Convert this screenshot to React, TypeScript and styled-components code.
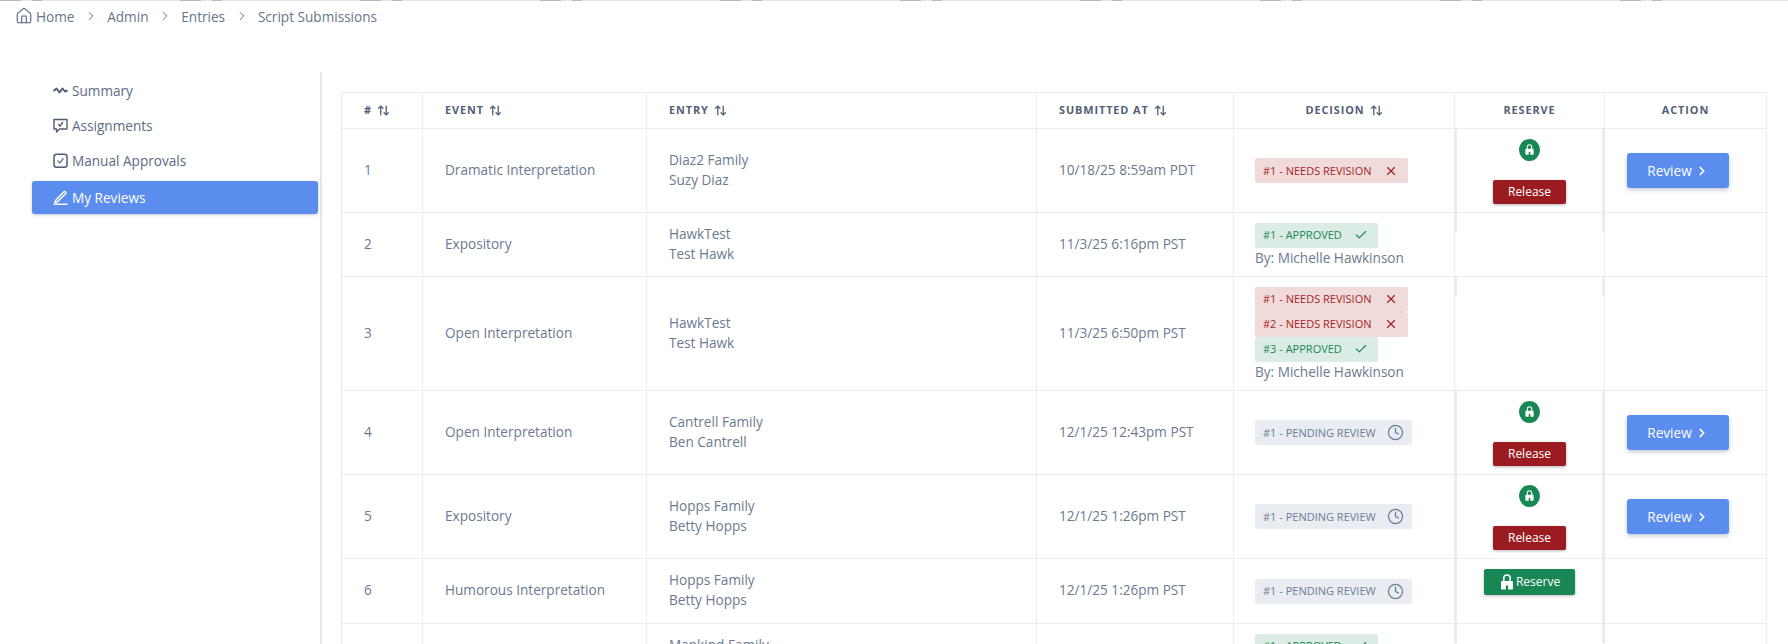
import React from "react";
import styled, { createGlobalStyle } from "styled-components";
import { ArrowUpDown, Check, ChevronRight, Clock, House, X } from "lucide-react";

const GlobalStyle = createGlobalStyle`
    html, body {
        margin: 0;
        height: 644px;
        overflow: hidden;
        background: #fff;
        font-family: "Open Sans", "Liberation Sans", sans-serif;
        color: #6b7a90;
    }
`

const TopStrip = styled.div`
    height: 1px;
    background: repeating-linear-gradient(90deg,
        #b9bbbb 0 21px, #e4e7e8 21px 32px, #b9bbbb 32px 42px, #e4e7e8 42px 180px);
`

const Breadcrumb = styled.nav`
    display: flex;
    align-items: center;
    height: 30px;
    padding-left: 15px;
    font-size: 13.6px;
    color: #66758c;
`

const Crumb = styled.span`
    display: flex;
    align-items: center;
    gap: 2px;
`

const CrumbArrow = styled(ChevronRight)`
    margin: 0 9.4px;
    color: #56657c;
`

const Layout = styled.div`
    display: flex;
    margin-top: 41px;
`

const Sidebar = styled.aside`
    box-sizing: border-box;
    width: 322px;
    height: 572px;
    padding: 2px 2px 0 32px;
    border-right: 2px solid #e3e5e8;
`

const NavItem = styled.a<{ $active?: boolean }>`
    display: flex;
    align-items: center;
    gap: 4px;
    height: 33px;
    margin-bottom: 2px;
    margin-top: ${p => (p.$active ? "4px" : "0")};
    padding-left: 21px;
    border-radius: 3px;
    font-size: 13.6px;
    background: ${p => (p.$active ? "#5b8def" : "transparent")};
    color: ${p => (p.$active ? "#fff" : "#5c6b82")};
    box-shadow: ${p => (p.$active ? "0 1px 3px rgba(60, 80, 120, 0.3)" : "none")};
`

const Content = styled.main`
    padding: 20px 0 0 19px;
`

const Table = styled.table`
    width: 1425px;
    table-layout: fixed;
    border-collapse: collapse;
    font-size: 13.6px;
`

const HeadCell = styled.th<{ $center?: boolean }>`
    height: 36px;
    padding: 0 22px 2px;
    box-sizing: border-box;
    border: 1px solid #e9edf2;
    font-size: 10.9px;
    font-weight: 700;
    letter-spacing: 0.9px;
    text-transform: uppercase;
    text-align: ${p => (p.$center ? "center" : "left")};
    color: #526075;
    white-space: nowrap;
`

const SortIcon = styled(ArrowUpDown)`
    margin-left: 5px;
    vertical-align: -3px;
`

const Row = styled.tr<{ $height: number }>`
    height: ${p => p.$height}px;
`

const Cell = styled.td`
    padding: 0 22px 2px;
    border: 1px solid #e9edf2;
    line-height: 20px;
    color: #6b7a90;
`

const DecisionCell = styled(Cell)`
    padding: 0 0 0 21px;
`

const ActionCell = styled(Cell)`
    padding: 0 22px;
`

const ReserveCell = styled(Cell)`
    padding: 0;
    vertical-align: top;
`

const ReserveBox = styled.div`
    display: flex;
    flex-direction: column;
    align-items: center;
    gap: 19px;
    min-height: 19px;
    padding: 9.5px 0 0;
    box-sizing: border-box;
    border-left: 2px solid #e9edf2;
    border-right: 2px solid #e9edf2;
    &:empty { height: 19px; padding: 0; }
`

const FullBox = styled(ReserveBox)`
    height: 83px;
`

const WideBox = styled(ReserveBox)`
    height: 64px;
`

const LockCircle = styled.span`
    display: flex;
    align-items: center;
    justify-content: center;
    width: 21px;
    height: 22px;
    border-radius: 50%;
    background: #198754;
    color: #fff;
`

const ReleaseButton = styled.button`
    width: 73px;
    height: 24px;
    padding: 0;
    border: 0;
    border-radius: 2px;
    background: #9b1c20;
    color: #fff;
    font: 500 12px "Open Sans", sans-serif;
    box-shadow: 0 1px 3px rgba(40, 40, 60, 0.35);
`

const ReserveButton = styled.button`
    display: flex;
    align-items: center;
    justify-content: center;
    gap: 1px;
    width: 91px;
    height: 26px;
    padding: 0;
    border: 0;
    border-radius: 2px;
    background: #198754;
    color: #fff;
    font: 500 12px "Open Sans", sans-serif;
    box-shadow: 0 1px 3px rgba(40, 40, 60, 0.3);
`

const ReviewButton = styled.button`
    display: flex;
    align-items: center;
    justify-content: center;
    gap: 3px;
    width: 102px;
    height: 35px;
    padding: 0;
    border: 0;
    border-radius: 3px;
    background: #5b8def;
    color: #fff;
    font: 500 13.6px "Open Sans", sans-serif;
    box-shadow: 0 2px 4px rgba(60, 80, 120, 0.3);
`

const badgeColors = {
    revision: { bg: "#f0dada", fg: "#a51f27" },
    approved: { bg: "#dbece4", fg: "#198754" },
    pending: { bg: "#e9ecf1", fg: "#6c7d96" },
}

type BadgeKind = keyof typeof badgeColors

const Badge = styled.div<{ $kind: BadgeKind }>`
    display: flex;
    align-items: center;
    justify-content: space-between;
    box-sizing: border-box;
    width: fit-content;
    height: 25px;
    padding: 0 8px;
    gap: 11px;
    border-radius: 2px;
    font-size: 11px;
    text-transform: uppercase;
    white-space: nowrap;
    background: ${p => badgeColors[p.$kind].bg};
    color: ${p => badgeColors[p.$kind].fg};
`

const CrossIcon = styled(X)`
    margin: 0 1.5px;
`

const TickIcon = styled(Check)`
    margin: 0 1.5px;
`

const ByLine = styled.div`
    height: 19px;
    line-height: 19px;
    white-space: nowrap;
`

const HomeGlyph = styled(House)`
    margin-right: 1px;
    color: #56657c;
`

function SummaryIcon() {
    return (
        <svg width="15" height="15" viewBox="0 0 15 15" fill="none" stroke="#4f5d73" strokeWidth="1.9" strokeLinejoin="round">
            <path d="M0.5 8 L3.5 5.5 L6.5 9.5 L9.5 5.5 L12 8.5 L14.5 7.5" />
        </svg>
    )
}

function AssignmentIcon() {
    return (
        <svg width="15" height="15" viewBox="0 0 15 15" fill="none" stroke="#4f5d73" strokeWidth="1.4" strokeLinejoin="round" strokeLinecap="round">
            <path d="M1 1.5 H14 V11 H6.5 L3.5 14 V11 H1 Z" />
            <path d="M5.5 6.5 L7 8 L9.5 4.5" />
        </svg>
    )
}

function ApprovalIcon() {
    return (
        <svg width="15" height="15" viewBox="0 0 15 15" fill="none" stroke="#4f5d73" strokeWidth="1.5" strokeLinejoin="round" strokeLinecap="round">
            <rect x="1" y="1.2" width="13" height="13" rx="2.5" />
            <path d="M4.8 7.8 L6.8 9.8 L10.2 5.6" strokeWidth="1.2" />
        </svg>
    )
}

function ReviewIcon() {
    return (
        <svg width="15" height="15" viewBox="0 0 15 15" fill="none" stroke="#fff" strokeWidth="1.4" strokeLinejoin="round" strokeLinecap="round">
            <path d="M2.5 10.5 L2 12.5 L4.2 12 L12.8 3.6 A1.4 1.4 0 0 0 10.9 1.7 Z" />
            <path d="M1 14.3 H14" />
        </svg>
    )
}

function LockIcon({ size }: { size: number }) {
    return (
        <svg width={size} height={size} viewBox="0 0 16 16" fill="currentColor">
            <path d="M3 7 H13 Q14 7 14 8 V14.5 Q14 15.5 13 15.5 H9.2 V11.5 H6.8 V15.5 H3 Q2 15.5 2 14.5 V8 Q2 7 3 7 Z" />
            <path d="M4.8 7.5 V4.2 A3.2 3.2 0 0 1 11.2 4.2 V7.5" fill="none" stroke="currentColor" strokeWidth="1.6" />
        </svg>
    )
}

function BadgeIcon({ kind }: { kind: BadgeKind }) {
    if (kind === "revision") return <CrossIcon size={14} strokeWidth={2} />
    if (kind === "approved") return <TickIcon size={14} strokeWidth={2} />
    return <Clock size={17} strokeWidth={1.8} />
}

type Decision = { label: string; kind: BadgeKind }
type RowData = {
    id: number
    event: string
    family: string
    person: string
    at: string
    decisions: Decision[]
    by?: string
    reserve: "held" | "open" | "none"
    height: number
}

const needs = (n: number): Decision => ({ label: `#${n} - Needs Revision`, kind: "revision" })
const approved = (n: number): Decision => ({ label: `#${n} - Approved`, kind: "approved" })
const pending = (n: number): Decision => ({ label: `#${n} - Pending Review`, kind: "pending" })

const rows: RowData[] = [
    { id: 1, event: "Dramatic Interpretation", family: "Diaz2 Family", person: "Suzy Diaz", at: "10/18/25 8:59am PDT", decisions: [needs(1)], reserve: "held", height: 84 },
    { id: 2, event: "Expository", family: "HawkTest", person: "Test Hawk", at: "11/3/25 6:16pm PST", decisions: [approved(1)], by: "Michelle Hawkinson", reserve: "none", height: 64 },
    { id: 3, event: "Open Interpretation", family: "HawkTest", person: "Test Hawk", at: "11/3/25 6:50pm PST", decisions: [needs(1), needs(2), approved(3)], by: "Michelle Hawkinson", reserve: "none", height: 114 },
    { id: 4, event: "Open Interpretation", family: "Cantrell Family", person: "Ben Cantrell", at: "12/1/25 12:43pm PST", decisions: [pending(1)], reserve: "held", height: 84 },
    { id: 5, event: "Expository", family: "Hopps Family", person: "Betty Hopps", at: "12/1/25 1:26pm PST", decisions: [pending(1)], reserve: "held", height: 84 },
    { id: 6, event: "Humorous Interpretation", family: "Hopps Family", person: "Betty Hopps", at: "12/1/25 1:26pm PST", decisions: [pending(1)], reserve: "open", height: 65 },
    { id: 7, event: "Expository", family: "Mankind Family", person: "Sam Mankind", at: "12/1/25 2:10pm PST", decisions: [approved(1)], by: "Michelle Hawkinson", reserve: "none", height: 64 },
]

const columns = [
    { title: "#", width: 81, sort: true },
    { title: "Event", width: 224, sort: true },
    { title: "Entry", width: 390, sort: true },
    { title: "Submitted At", width: 197, sort: true },
    { title: "Decision", width: 221, sort: true, center: true },
    { title: "Reserve", width: 150, center: true },
    { title: "Action", width: 162, center: true },
]

function ReserveContent({ row }: { row: RowData }) {
    if (row.reserve === "held") {
        return (
            <FullBox>
                <LockCircle><LockIcon size={11} /></LockCircle>
                <ReleaseButton>Release</ReleaseButton>
            </FullBox>
        )
    }
    if (row.reserve === "open") {
        return (
            <WideBox>
                <ReserveButton><LockIcon size={16} />Reserve</ReserveButton>
            </WideBox>
        )
    }
    return <ReserveBox />
}

export default function App() {
    return (
        <>
            <GlobalStyle />
            <TopStrip />
            <Breadcrumb>
                <Crumb><HomeGlyph size={18} strokeWidth={1.5} />Home</Crumb>
                <CrumbArrow size={14} strokeWidth={1.6} />
                <Crumb>Admin</Crumb>
                <CrumbArrow size={14} strokeWidth={1.6} />
                <Crumb>Entries</Crumb>
                <CrumbArrow size={14} strokeWidth={1.6} />
                <Crumb>Script Submissions</Crumb>
            </Breadcrumb>
            <Layout>
                <Sidebar>
                    <NavItem><SummaryIcon />Summary</NavItem>
                    <NavItem><AssignmentIcon />Assignments</NavItem>
                    <NavItem><ApprovalIcon />Manual Approvals</NavItem>
                    <NavItem $active><ReviewIcon />My Reviews</NavItem>
                </Sidebar>
                <Content>
                    <Table>
                        <colgroup>
                            {columns.map(c => <col key={c.title} width={c.width} />)}
                        </colgroup>
                        <thead>
                            <tr>
                                {columns.map(c => (
                                    <HeadCell key={c.title} $center={c.center}>
                                        {c.title}
                                        {c.sort && <SortIcon size={13} strokeWidth={2.4} />}
                                    </HeadCell>
                                ))}
                            </tr>
                        </thead>
                        <tbody>
                            {rows.map(row => (
                                <Row key={row.id} $height={row.height}>
                                    <Cell>{row.id}</Cell>
                                    <Cell>{row.event}</Cell>
                                    <Cell>{row.family}<br />{row.person}</Cell>
                                    <Cell>{row.at}</Cell>
                                    <DecisionCell>
                                        {row.decisions.map(d => (
                                            <Badge key={d.label} $kind={d.kind}>
                                                {d.label}
                                                <BadgeIcon kind={d.kind} />
                                            </Badge>
                                        ))}
                                        {row.by && <ByLine>By: {row.by}</ByLine>}
                                    </DecisionCell>
                                    <ReserveCell><ReserveContent row={row} /></ReserveCell>
                                    <ActionCell>{row.reserve === "held" && <ReviewButton>Review <ChevronRight size={14} strokeWidth={3} /></ReviewButton>}</ActionCell>
                                </Row>
                            ))}
                        </tbody>
                    </Table>
                </Content>
            </Layout>
        </>
    )
}
